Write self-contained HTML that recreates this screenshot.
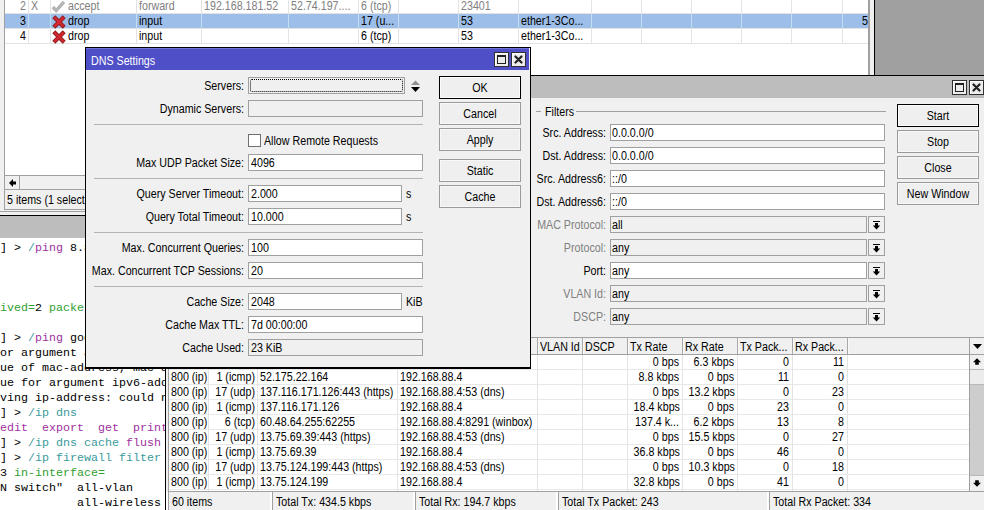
<!DOCTYPE html><html><head><meta charset="utf-8"><style>
html,body{margin:0;padding:0;}
body{width:984px;height:510px;position:relative;overflow:hidden;background:#a0a0a0;font-family:"Liberation Sans", sans-serif;font-size:11px;color:#000;}
div{position:absolute;box-sizing:border-box;}
.t{white-space:pre;font-size:12px;overflow:visible;}
.m{font-family:"Liberation Mono", monospace;font-size:11.67px;}

</style></head><body>
<div style="left:0px;top:0px;width:875px;height:216px;background:#f0f0f0;"></div>
<div style="left:874px;top:0px;width:1px;height:75px;background:#000;"></div>
<div style="left:4px;top:0px;width:1px;height:210px;background:#a0a0a0;"></div>
<div style="left:5px;top:0px;width:864px;height:175px;background:#fff;"></div>
<div style="left:868px;top:0px;width:2px;height:210px;background:#a0a0a0;"></div>
<div style="left:5px;top:13px;width:863px;height:1px;background:#e3e3e3;"></div>
<div style="left:5px;top:28px;width:863px;height:1px;background:#e3e3e3;"></div>
<div style="left:5px;top:43px;width:863px;height:1px;background:#e3e3e3;"></div>
<div style="left:28px;top:0px;width:1px;height:43px;background:#e3e3e3;"></div>
<div style="left:50px;top:0px;width:1px;height:43px;background:#e3e3e3;"></div>
<div style="left:136px;top:0px;width:1px;height:43px;background:#e3e3e3;"></div>
<div style="left:201px;top:0px;width:1px;height:43px;background:#e3e3e3;"></div>
<div style="left:288px;top:0px;width:1px;height:43px;background:#e3e3e3;"></div>
<div style="left:358px;top:0px;width:1px;height:43px;background:#e3e3e3;"></div>
<div style="left:398px;top:0px;width:1px;height:43px;background:#e3e3e3;"></div>
<div style="left:458px;top:0px;width:1px;height:43px;background:#e3e3e3;"></div>
<div style="left:518px;top:0px;width:1px;height:43px;background:#e3e3e3;"></div>
<div style="left:591px;top:0px;width:1px;height:43px;background:#e3e3e3;"></div>
<div style="left:641px;top:0px;width:1px;height:43px;background:#e3e3e3;"></div>
<div style="left:691px;top:0px;width:1px;height:43px;background:#e3e3e3;"></div>
<div style="left:741px;top:0px;width:1px;height:43px;background:#e3e3e3;"></div>
<div style="left:791px;top:0px;width:1px;height:43px;background:#e3e3e3;"></div>
<div style="left:842px;top:0px;width:1px;height:43px;background:#e3e3e3;"></div>
<div style="left:5px;top:14px;width:863px;height:14px;background:#9cbee8;"></div>
<div style="left:28px;top:14px;width:1px;height:14px;background:#c4dcf4;"></div>
<div style="left:50px;top:14px;width:1px;height:14px;background:#c4dcf4;"></div>
<div style="left:136px;top:14px;width:1px;height:14px;background:#c4dcf4;"></div>
<div style="left:201px;top:14px;width:1px;height:14px;background:#c4dcf4;"></div>
<div style="left:288px;top:14px;width:1px;height:14px;background:#c4dcf4;"></div>
<div style="left:358px;top:14px;width:1px;height:14px;background:#c4dcf4;"></div>
<div style="left:398px;top:14px;width:1px;height:14px;background:#c4dcf4;"></div>
<div style="left:458px;top:14px;width:1px;height:14px;background:#c4dcf4;"></div>
<div style="left:518px;top:14px;width:1px;height:14px;background:#c4dcf4;"></div>
<div style="left:591px;top:14px;width:1px;height:14px;background:#c4dcf4;"></div>
<div style="left:641px;top:14px;width:1px;height:14px;background:#c4dcf4;"></div>
<div style="left:691px;top:14px;width:1px;height:14px;background:#c4dcf4;"></div>
<div style="left:741px;top:14px;width:1px;height:14px;background:#c4dcf4;"></div>
<div style="left:791px;top:14px;width:1px;height:14px;background:#c4dcf4;"></div>
<div style="left:842px;top:14px;width:1px;height:14px;background:#c4dcf4;"></div>
<div class="t" style="left:5px;top:-1px;width:21px;height:15px;line-height:15px;text-align:right;transform:scaleX(0.89);transform-origin:100% 0;color:#808080;">2</div>
<div class="t" style="left:31px;top:-1px;height:15px;line-height:15px;text-align:left;transform:scaleX(0.89);transform-origin:0 0;color:#808080;">X</div>
<div class="t" style="left:68px;top:-1px;height:15px;line-height:15px;text-align:left;transform:scaleX(0.89);transform-origin:0 0;color:#808080;">accept</div>
<div class="t" style="left:139px;top:-1px;height:15px;line-height:15px;text-align:left;transform:scaleX(0.89);transform-origin:0 0;color:#808080;">forward</div>
<div class="t" style="left:204px;top:-1px;height:15px;line-height:15px;text-align:left;transform:scaleX(0.89);transform-origin:0 0;color:#808080;">192.168.181.52</div>
<div class="t" style="left:291px;top:-1px;height:15px;line-height:15px;text-align:left;transform:scaleX(0.89);transform-origin:0 0;color:#808080;">52.74.197....</div>
<div class="t" style="left:361px;top:-1px;height:15px;line-height:15px;text-align:left;transform:scaleX(0.89);transform-origin:0 0;color:#808080;">6 (tcp)</div>
<div class="t" style="left:461px;top:-1px;height:15px;line-height:15px;text-align:left;transform:scaleX(0.89);transform-origin:0 0;color:#808080;">23401</div>
<div class="t" style="left:5px;top:14px;width:21px;height:15px;line-height:15px;text-align:right;transform:scaleX(0.89);transform-origin:100% 0;color:#000;">3</div>
<div class="t" style="left:68px;top:14px;height:15px;line-height:15px;text-align:left;transform:scaleX(0.89);transform-origin:0 0;color:#000;">drop</div>
<div class="t" style="left:139px;top:14px;height:15px;line-height:15px;text-align:left;transform:scaleX(0.89);transform-origin:0 0;color:#000;">input</div>
<div class="t" style="left:361px;top:14px;height:15px;line-height:15px;text-align:left;transform:scaleX(0.89);transform-origin:0 0;color:#000;">17 (u...</div>
<div class="t" style="left:461px;top:14px;height:15px;line-height:15px;text-align:left;transform:scaleX(0.89);transform-origin:0 0;color:#000;">53</div>
<div class="t" style="left:521px;top:14px;height:15px;line-height:15px;text-align:left;transform:scaleX(0.89);transform-origin:0 0;color:#000;">ether1-3Co...</div>
<div class="t" style="left:843px;top:14px;width:25px;height:15px;line-height:15px;text-align:right;transform:scaleX(0.89);transform-origin:100% 0;color:#000;">5</div>
<div class="t" style="left:5px;top:29px;width:21px;height:15px;line-height:15px;text-align:right;transform:scaleX(0.89);transform-origin:100% 0;color:#000;">4</div>
<div class="t" style="left:68px;top:29px;height:15px;line-height:15px;text-align:left;transform:scaleX(0.89);transform-origin:0 0;color:#000;">drop</div>
<div class="t" style="left:139px;top:29px;height:15px;line-height:15px;text-align:left;transform:scaleX(0.89);transform-origin:0 0;color:#000;">input</div>
<div class="t" style="left:361px;top:29px;height:15px;line-height:15px;text-align:left;transform:scaleX(0.89);transform-origin:0 0;color:#000;">6 (tcp)</div>
<div class="t" style="left:461px;top:29px;height:15px;line-height:15px;text-align:left;transform:scaleX(0.89);transform-origin:0 0;color:#000;">53</div>
<div class="t" style="left:521px;top:29px;height:15px;line-height:15px;text-align:left;transform:scaleX(0.89);transform-origin:0 0;color:#000;">ether1-3Co...</div>
<svg style="position:absolute;left:51px;top:0px" width="15" height="14" viewBox="0 0 15 14"><path d="M1.8 7L5.2 10.6L13 1.8" stroke="#b4b4b4" stroke-width="3.4" fill="none" stroke-linejoin="miter"/></svg>
<svg style="position:absolute;left:52px;top:15px" width="14" height="14" viewBox="0 0 14 14"><path d="M3.3 3.3L10.7 10.7M10.7 3.3L3.3 10.7" stroke="#8a1a1e" stroke-width="4.2" stroke-linecap="square"/><path d="M3.3 3.3L10.7 10.7M10.7 3.3L3.3 10.7" stroke="#d0282e" stroke-width="2.6" stroke-linecap="square"/></svg>
<svg style="position:absolute;left:52px;top:30px" width="14" height="14" viewBox="0 0 14 14"><path d="M3.3 3.3L10.7 10.7M10.7 3.3L3.3 10.7" stroke="#8a1a1e" stroke-width="4.2" stroke-linecap="square"/><path d="M3.3 3.3L10.7 10.7M10.7 3.3L3.3 10.7" stroke="#d0282e" stroke-width="2.6" stroke-linecap="square"/></svg>
<div style="left:5px;top:175px;width:864px;height:15px;background:#f0f0f0;border-top:1px solid #a0a0a0;border-bottom:1px solid #a0a0a0;"></div>
<div style="left:5px;top:175px;width:15px;height:15px;border-right:1px solid #a0a0a0;border-top:1px solid #a0a0a0;border-bottom:1px solid #a0a0a0;"></div>
<svg style="position:absolute;left:8px;top:178px" width="9" height="10" viewBox="0 0 9 10"><path d="M1 5L5 1V3.5H8V6.5H5V9Z" fill="#000"/></svg>
<div class="t" style="left:7px;top:192px;height:17px;line-height:17px;text-align:left;transform:scaleX(0.89);transform-origin:0 0;">5 items (1 selected)</div>
<div style="left:4px;top:209px;width:865px;height:1px;background:#a0a0a0;"></div>
<div style="left:0px;top:211px;width:875px;height:1px;background:#a0a0a0;"></div>
<div style="left:0px;top:215px;width:984px;height:1px;background:#000;"></div>
<div style="left:0px;top:216px;width:984px;height:22px;background:#bdbdbd;"></div>
<div style="left:0px;top:238px;width:984px;height:272px;background:#fff;"></div>
<div class="t m" style="left:0px;top:241px;height:15px;line-height:15px;"><span style="color:#000">] > </span><span style="color:#3a9a9a">/</span><span style="color:#a030a0">ping</span><span style="color:#000"> 8.8.8.8</span></div>
<div class="t m" style="left:0px;top:301px;height:15px;line-height:15px;"><span style="color:#30a030">ived=</span><span style="color:#000">2</span><span style="color:#30a030"> packet-loss=</span></div>
<div class="t m" style="left:0px;top:331px;height:15px;line-height:15px;"><span style="color:#000">] > </span><span style="color:#3a9a9a">/</span><span style="color:#a030a0">ping</span><span style="color:#000"> google.com</span></div>
<div class="t m" style="left:0px;top:346px;height:15px;line-height:15px;"><span style="color:#000">or argument address</span></div>
<div class="t m" style="left:0px;top:361px;height:15px;line-height:15px;"><span style="color:#000">ue of mac-address, mac-address</span></div>
<div class="t m" style="left:0px;top:376px;height:15px;line-height:15px;"><span style="color:#000">ue for argument ipv6-address</span></div>
<div class="t m" style="left:0px;top:391px;height:15px;line-height:15px;"><span style="color:#000">ving ip-address: could not</span></div>
<div class="t m" style="left:0px;top:406px;height:15px;line-height:15px;"><span style="color:#000">] > </span><span style="color:#3a9a9a">/ip dns</span></div>
<div class="t m" style="left:0px;top:421px;height:15px;line-height:15px;"><span style="color:#a030a0">edit  export  get  print</span></div>
<div class="t m" style="left:0px;top:436px;height:15px;line-height:15px;"><span style="color:#000">] > </span><span style="color:#3a9a9a">/ip dns cache </span><span style="color:#a030a0">flush</span></div>
<div class="t m" style="left:0px;top:451px;height:15px;line-height:15px;"><span style="color:#000">] > </span><span style="color:#3a9a9a">/ip firewall filter</span></div>
<div class="t m" style="left:0px;top:466px;height:15px;line-height:15px;"><span style="color:#000">3 </span><span style="color:#30a030">in-interface=</span></div>
<div class="t m" style="left:0px;top:481px;height:15px;line-height:15px;"><span style="color:#000">N switch"  all-vlan</span></div>
<div class="t m" style="left:0px;top:496px;height:15px;line-height:15px;"><span style="color:#000">           all-wireless</span></div>
<div style="left:165px;top:75px;width:819px;height:435px;background:#f0f0f0;border-left:1px solid #000;border-top:1px solid #000;"></div>
<div style="left:166px;top:76px;width:818px;height:22px;background:#bdbdbd;"></div>
<div style="left:952px;top:80px;width:15px;height:15px;background:#ececec;border:1px solid #303030;box-shadow:inset 1px 1px 0 #fff;"><div style="left:2px;top:2px;width:9px;height:9px;border:1px solid #202020;border-top-width:2px;"></div></div>
<div style="left:969px;top:80px;width:15px;height:15px;background:#ececec;border:1px solid #303030;box-shadow:inset 1px 1px 0 #fff;"></div>
<svg style="position:absolute;left:972px;top:83px" width="9" height="9" viewBox="0 0 9 9"><path d="M1.5 1.5L7.5 7.5M7.5 1.5L1.5 7.5" stroke="#202020" stroke-width="2.2" stroke-linecap="round"/></svg>
<div style="left:536px;top:111px;width:5px;height:1px;background:#a0a0a0;"></div>
<div style="left:576px;top:111px;width:310px;height:1px;background:#a0a0a0;"></div>
<div class="t" style="left:545px;top:105px;height:15px;line-height:15px;text-align:left;transform:scaleX(0.89);transform-origin:0 0;">Filters</div>
<div style="left:610px;top:124px;width:275px;height:17px;background:#fff;border:1px solid #a0a0a0;"></div>
<div class="t" style="left:612px;top:126px;height:15px;line-height:15px;text-align:left;transform:scaleX(0.89);transform-origin:0 0;">0.0.0.0/0</div>
<div class="t" style="left:446px;top:126px;width:160px;height:15px;line-height:15px;text-align:right;transform:scaleX(0.89);transform-origin:100% 0;color:#000;">Src. Address:</div>
<div style="left:610px;top:147px;width:275px;height:17px;background:#fff;border:1px solid #a0a0a0;"></div>
<div class="t" style="left:612px;top:149px;height:15px;line-height:15px;text-align:left;transform:scaleX(0.89);transform-origin:0 0;">0.0.0.0/0</div>
<div class="t" style="left:446px;top:149px;width:160px;height:15px;line-height:15px;text-align:right;transform:scaleX(0.89);transform-origin:100% 0;color:#000;">Dst. Address:</div>
<div style="left:610px;top:170px;width:275px;height:17px;background:#fff;border:1px solid #a0a0a0;"></div>
<div class="t" style="left:612px;top:172px;height:15px;line-height:15px;text-align:left;transform:scaleX(0.89);transform-origin:0 0;">::/0</div>
<div class="t" style="left:446px;top:172px;width:160px;height:15px;line-height:15px;text-align:right;transform:scaleX(0.89);transform-origin:100% 0;color:#000;">Src. Address6:</div>
<div style="left:610px;top:193px;width:275px;height:17px;background:#fff;border:1px solid #a0a0a0;"></div>
<div class="t" style="left:612px;top:195px;height:15px;line-height:15px;text-align:left;transform:scaleX(0.89);transform-origin:0 0;">::/0</div>
<div class="t" style="left:446px;top:195px;width:160px;height:15px;line-height:15px;text-align:right;transform:scaleX(0.89);transform-origin:100% 0;color:#000;">Dst. Address6:</div>
<div style="left:610px;top:216px;width:257px;height:17px;background:#f0f0f0;border:1px solid #a0a0a0;"></div>
<div class="t" style="left:612px;top:218px;height:15px;line-height:15px;text-align:left;transform:scaleX(0.89);transform-origin:0 0;">all</div>
<div class="t" style="left:446px;top:218px;width:160px;height:15px;line-height:15px;text-align:right;transform:scaleX(0.89);transform-origin:100% 0;color:#808080;">MAC Protocol:</div>
<div style="left:868px;top:216px;width:17px;height:17px;background:#f0f0f0;border:1px solid #a0a0a0;"></div>
<svg style="position:absolute;left:872px;top:221px" width="9" height="9" viewBox="0 0 9 9"><rect x="1" y="0" width="7" height="1" fill="#000"/><path d="M3 2H6V4.5H8.2L4.5 8.5L0.8 4.5H3Z" fill="#000"/></svg>
<div style="left:610px;top:239px;width:257px;height:17px;background:#f0f0f0;border:1px solid #a0a0a0;"></div>
<div class="t" style="left:612px;top:241px;height:15px;line-height:15px;text-align:left;transform:scaleX(0.89);transform-origin:0 0;">any</div>
<div class="t" style="left:446px;top:241px;width:160px;height:15px;line-height:15px;text-align:right;transform:scaleX(0.89);transform-origin:100% 0;color:#808080;">Protocol:</div>
<div style="left:868px;top:239px;width:17px;height:17px;background:#f0f0f0;border:1px solid #a0a0a0;"></div>
<svg style="position:absolute;left:872px;top:244px" width="9" height="9" viewBox="0 0 9 9"><rect x="1" y="0" width="7" height="1" fill="#000"/><path d="M3 2H6V4.5H8.2L4.5 8.5L0.8 4.5H3Z" fill="#000"/></svg>
<div style="left:610px;top:262px;width:257px;height:17px;background:#fff;border:1px solid #a0a0a0;"></div>
<div class="t" style="left:612px;top:264px;height:15px;line-height:15px;text-align:left;transform:scaleX(0.89);transform-origin:0 0;">any</div>
<div class="t" style="left:446px;top:264px;width:160px;height:15px;line-height:15px;text-align:right;transform:scaleX(0.89);transform-origin:100% 0;color:#000;">Port:</div>
<div style="left:868px;top:262px;width:17px;height:17px;background:#f0f0f0;border:1px solid #a0a0a0;"></div>
<svg style="position:absolute;left:872px;top:267px" width="9" height="9" viewBox="0 0 9 9"><rect x="1" y="0" width="7" height="1" fill="#000"/><path d="M3 2H6V4.5H8.2L4.5 8.5L0.8 4.5H3Z" fill="#000"/></svg>
<div style="left:610px;top:285px;width:257px;height:17px;background:#f0f0f0;border:1px solid #a0a0a0;"></div>
<div class="t" style="left:612px;top:287px;height:15px;line-height:15px;text-align:left;transform:scaleX(0.89);transform-origin:0 0;">any</div>
<div class="t" style="left:446px;top:287px;width:160px;height:15px;line-height:15px;text-align:right;transform:scaleX(0.89);transform-origin:100% 0;color:#808080;">VLAN Id:</div>
<div style="left:868px;top:285px;width:17px;height:17px;background:#f0f0f0;border:1px solid #a0a0a0;"></div>
<svg style="position:absolute;left:872px;top:290px" width="9" height="9" viewBox="0 0 9 9"><rect x="1" y="0" width="7" height="1" fill="#000"/><path d="M3 2H6V4.5H8.2L4.5 8.5L0.8 4.5H3Z" fill="#000"/></svg>
<div style="left:610px;top:308px;width:257px;height:17px;background:#f0f0f0;border:1px solid #a0a0a0;"></div>
<div class="t" style="left:612px;top:310px;height:15px;line-height:15px;text-align:left;transform:scaleX(0.89);transform-origin:0 0;">any</div>
<div class="t" style="left:446px;top:310px;width:160px;height:15px;line-height:15px;text-align:right;transform:scaleX(0.89);transform-origin:100% 0;color:#808080;">DSCP:</div>
<div style="left:868px;top:308px;width:17px;height:17px;background:#f0f0f0;border:1px solid #a0a0a0;"></div>
<svg style="position:absolute;left:872px;top:313px" width="9" height="9" viewBox="0 0 9 9"><rect x="1" y="0" width="7" height="1" fill="#000"/><path d="M3 2H6V4.5H8.2L4.5 8.5L0.8 4.5H3Z" fill="#000"/></svg>
<div style="left:897px;top:104px;width:82px;height:23px;background:#efefef;border:1px solid #000;box-shadow:inset 0 0 0 1px #fcfcfc;"></div>
<div class="t" style="left:897px;top:109px;width:82px;height:15px;line-height:15px;text-align:center;transform:scaleX(0.89);transform-origin:50% 0;">Start</div>
<div style="left:897px;top:130px;width:82px;height:23px;background:#efefef;border:1px solid #9a9a9a;box-shadow:inset 0 0 0 1px #f8f8f8;"></div>
<div class="t" style="left:897px;top:135px;width:82px;height:15px;line-height:15px;text-align:center;transform:scaleX(0.89);transform-origin:50% 0;">Stop</div>
<div style="left:897px;top:156px;width:82px;height:23px;background:#efefef;border:1px solid #9a9a9a;box-shadow:inset 0 0 0 1px #f8f8f8;"></div>
<div class="t" style="left:897px;top:161px;width:82px;height:15px;line-height:15px;text-align:center;transform:scaleX(0.89);transform-origin:50% 0;">Close</div>
<div style="left:897px;top:182px;width:82px;height:23px;background:#efefef;border:1px solid #9a9a9a;box-shadow:inset 0 0 0 1px #f8f8f8;"></div>
<div class="t" style="left:897px;top:187px;width:82px;height:15px;line-height:15px;text-align:center;transform:scaleX(0.89);transform-origin:50% 0;">New Window</div>
<div style="left:168px;top:337px;width:816px;height:155px;background:#fff;border:1px solid #a0a0a0;"></div>
<div style="left:169px;top:338px;width:800px;height:17px;background:#f0f0f0;border-bottom:1px solid #a0a0a0;"></div>
<div style="left:208px;top:355px;width:1px;height:136px;background:#e3e3e3;"></div>
<div style="left:208px;top:338px;width:1px;height:16px;background:#a8a8a8;"></div>
<div style="left:209px;top:338px;width:1px;height:16px;background:#fafafa;"></div>
<div style="left:257px;top:355px;width:1px;height:136px;background:#e3e3e3;"></div>
<div style="left:257px;top:338px;width:1px;height:16px;background:#a8a8a8;"></div>
<div style="left:258px;top:338px;width:1px;height:16px;background:#fafafa;"></div>
<div style="left:397px;top:355px;width:1px;height:136px;background:#e3e3e3;"></div>
<div style="left:397px;top:338px;width:1px;height:16px;background:#a8a8a8;"></div>
<div style="left:398px;top:338px;width:1px;height:16px;background:#fafafa;"></div>
<div style="left:537px;top:355px;width:1px;height:136px;background:#e3e3e3;"></div>
<div style="left:537px;top:338px;width:1px;height:16px;background:#a8a8a8;"></div>
<div style="left:538px;top:338px;width:1px;height:16px;background:#fafafa;"></div>
<div style="left:582px;top:355px;width:1px;height:136px;background:#e3e3e3;"></div>
<div style="left:582px;top:338px;width:1px;height:16px;background:#a8a8a8;"></div>
<div style="left:583px;top:338px;width:1px;height:16px;background:#fafafa;"></div>
<div style="left:627px;top:355px;width:1px;height:136px;background:#e3e3e3;"></div>
<div style="left:627px;top:338px;width:1px;height:16px;background:#a8a8a8;"></div>
<div style="left:628px;top:338px;width:1px;height:16px;background:#fafafa;"></div>
<div style="left:682px;top:355px;width:1px;height:136px;background:#e3e3e3;"></div>
<div style="left:682px;top:338px;width:1px;height:16px;background:#a8a8a8;"></div>
<div style="left:683px;top:338px;width:1px;height:16px;background:#fafafa;"></div>
<div style="left:737px;top:355px;width:1px;height:136px;background:#e3e3e3;"></div>
<div style="left:737px;top:338px;width:1px;height:16px;background:#a8a8a8;"></div>
<div style="left:738px;top:338px;width:1px;height:16px;background:#fafafa;"></div>
<div style="left:792px;top:355px;width:1px;height:136px;background:#e3e3e3;"></div>
<div style="left:792px;top:338px;width:1px;height:16px;background:#a8a8a8;"></div>
<div style="left:793px;top:338px;width:1px;height:16px;background:#fafafa;"></div>
<div style="left:847px;top:355px;width:1px;height:136px;background:#e3e3e3;"></div>
<div style="left:847px;top:338px;width:1px;height:16px;background:#a8a8a8;"></div>
<div style="left:848px;top:338px;width:1px;height:16px;background:#fafafa;"></div>
<div style="left:169px;top:369px;width:800px;height:1px;background:#e8e8e8;"></div>
<div style="left:169px;top:384px;width:800px;height:1px;background:#e8e8e8;"></div>
<div style="left:169px;top:399px;width:800px;height:1px;background:#e8e8e8;"></div>
<div style="left:169px;top:414px;width:800px;height:1px;background:#e8e8e8;"></div>
<div style="left:169px;top:429px;width:800px;height:1px;background:#e8e8e8;"></div>
<div style="left:169px;top:444px;width:800px;height:1px;background:#e8e8e8;"></div>
<div style="left:169px;top:459px;width:800px;height:1px;background:#e8e8e8;"></div>
<div style="left:169px;top:474px;width:800px;height:1px;background:#e8e8e8;"></div>
<div style="left:169px;top:489px;width:800px;height:1px;background:#e8e8e8;"></div>
<div class="t" style="left:540px;top:340px;height:15px;line-height:15px;text-align:left;transform:scaleX(0.89);transform-origin:0 0;">VLAN Id</div>
<div class="t" style="left:585px;top:340px;height:15px;line-height:15px;text-align:left;transform:scaleX(0.89);transform-origin:0 0;">DSCP</div>
<div class="t" style="left:630px;top:340px;height:15px;line-height:15px;text-align:left;transform:scaleX(0.89);transform-origin:0 0;">Tx Rate</div>
<div class="t" style="left:685px;top:340px;height:15px;line-height:15px;text-align:left;transform:scaleX(0.89);transform-origin:0 0;">Rx Rate</div>
<div class="t" style="left:740px;top:340px;height:15px;line-height:15px;text-align:left;transform:scaleX(0.89);transform-origin:0 0;">Tx Pack...</div>
<div class="t" style="left:795px;top:340px;height:15px;line-height:15px;text-align:left;transform:scaleX(0.89);transform-origin:0 0;">Rx Pack...</div>
<div class="t" style="left:171px;top:355px;height:15px;line-height:15px;text-align:left;transform:scaleX(0.89);transform-origin:0 0;">800 (ip)</div>
<div class="t" style="left:209px;top:355px;width:46px;height:15px;line-height:15px;text-align:right;transform:scaleX(0.89);transform-origin:100% 0;">17 (udp)</div>
<div class="t" style="left:260px;top:355px;height:15px;line-height:15px;text-align:left;transform:scaleX(0.89);transform-origin:0 0;">52.175.22.164:443 (https)</div>
<div class="t" style="left:400px;top:355px;height:15px;line-height:15px;text-align:left;transform:scaleX(0.89);transform-origin:0 0;">192.168.88.4:53 (dns)</div>
<div class="t" style="left:628px;top:355px;width:51px;height:15px;line-height:15px;text-align:right;transform:scaleX(0.89);transform-origin:100% 0;">0 bps</div>
<div class="t" style="left:683px;top:355px;width:51px;height:15px;line-height:15px;text-align:right;transform:scaleX(0.89);transform-origin:100% 0;">6.3 kbps</div>
<div class="t" style="left:738px;top:355px;width:51px;height:15px;line-height:15px;text-align:right;transform:scaleX(0.89);transform-origin:100% 0;">0</div>
<div class="t" style="left:793px;top:355px;width:51px;height:15px;line-height:15px;text-align:right;transform:scaleX(0.89);transform-origin:100% 0;">11</div>
<div class="t" style="left:171px;top:370px;height:15px;line-height:15px;text-align:left;transform:scaleX(0.89);transform-origin:0 0;">800 (ip)</div>
<div class="t" style="left:209px;top:370px;width:46px;height:15px;line-height:15px;text-align:right;transform:scaleX(0.89);transform-origin:100% 0;">1 (icmp)</div>
<div class="t" style="left:260px;top:370px;height:15px;line-height:15px;text-align:left;transform:scaleX(0.89);transform-origin:0 0;">52.175.22.164</div>
<div class="t" style="left:400px;top:370px;height:15px;line-height:15px;text-align:left;transform:scaleX(0.89);transform-origin:0 0;">192.168.88.4</div>
<div class="t" style="left:628px;top:370px;width:51px;height:15px;line-height:15px;text-align:right;transform:scaleX(0.89);transform-origin:100% 0;">8.8 kbps</div>
<div class="t" style="left:683px;top:370px;width:51px;height:15px;line-height:15px;text-align:right;transform:scaleX(0.89);transform-origin:100% 0;">0 bps</div>
<div class="t" style="left:738px;top:370px;width:51px;height:15px;line-height:15px;text-align:right;transform:scaleX(0.89);transform-origin:100% 0;">11</div>
<div class="t" style="left:793px;top:370px;width:51px;height:15px;line-height:15px;text-align:right;transform:scaleX(0.89);transform-origin:100% 0;">0</div>
<div class="t" style="left:171px;top:385px;height:15px;line-height:15px;text-align:left;transform:scaleX(0.89);transform-origin:0 0;">800 (ip)</div>
<div class="t" style="left:209px;top:385px;width:46px;height:15px;line-height:15px;text-align:right;transform:scaleX(0.89);transform-origin:100% 0;">17 (udp)</div>
<div class="t" style="left:260px;top:385px;height:15px;line-height:15px;text-align:left;transform:scaleX(0.89);transform-origin:0 0;">137.116.171.126:443 (https)</div>
<div class="t" style="left:400px;top:385px;height:15px;line-height:15px;text-align:left;transform:scaleX(0.89);transform-origin:0 0;">192.168.88.4:53 (dns)</div>
<div class="t" style="left:628px;top:385px;width:51px;height:15px;line-height:15px;text-align:right;transform:scaleX(0.89);transform-origin:100% 0;">0 bps</div>
<div class="t" style="left:683px;top:385px;width:51px;height:15px;line-height:15px;text-align:right;transform:scaleX(0.89);transform-origin:100% 0;">13.2 kbps</div>
<div class="t" style="left:738px;top:385px;width:51px;height:15px;line-height:15px;text-align:right;transform:scaleX(0.89);transform-origin:100% 0;">0</div>
<div class="t" style="left:793px;top:385px;width:51px;height:15px;line-height:15px;text-align:right;transform:scaleX(0.89);transform-origin:100% 0;">23</div>
<div class="t" style="left:171px;top:400px;height:15px;line-height:15px;text-align:left;transform:scaleX(0.89);transform-origin:0 0;">800 (ip)</div>
<div class="t" style="left:209px;top:400px;width:46px;height:15px;line-height:15px;text-align:right;transform:scaleX(0.89);transform-origin:100% 0;">1 (icmp)</div>
<div class="t" style="left:260px;top:400px;height:15px;line-height:15px;text-align:left;transform:scaleX(0.89);transform-origin:0 0;">137.116.171.126</div>
<div class="t" style="left:400px;top:400px;height:15px;line-height:15px;text-align:left;transform:scaleX(0.89);transform-origin:0 0;">192.168.88.4</div>
<div class="t" style="left:628px;top:400px;width:51px;height:15px;line-height:15px;text-align:right;transform:scaleX(0.89);transform-origin:100% 0;">18.4 kbps</div>
<div class="t" style="left:683px;top:400px;width:51px;height:15px;line-height:15px;text-align:right;transform:scaleX(0.89);transform-origin:100% 0;">0 bps</div>
<div class="t" style="left:738px;top:400px;width:51px;height:15px;line-height:15px;text-align:right;transform:scaleX(0.89);transform-origin:100% 0;">23</div>
<div class="t" style="left:793px;top:400px;width:51px;height:15px;line-height:15px;text-align:right;transform:scaleX(0.89);transform-origin:100% 0;">0</div>
<div class="t" style="left:171px;top:415px;height:15px;line-height:15px;text-align:left;transform:scaleX(0.89);transform-origin:0 0;">800 (ip)</div>
<div class="t" style="left:209px;top:415px;width:46px;height:15px;line-height:15px;text-align:right;transform:scaleX(0.89);transform-origin:100% 0;">6 (tcp)</div>
<div class="t" style="left:260px;top:415px;height:15px;line-height:15px;text-align:left;transform:scaleX(0.89);transform-origin:0 0;">60.48.64.255:62255</div>
<div class="t" style="left:400px;top:415px;height:15px;line-height:15px;text-align:left;transform:scaleX(0.89);transform-origin:0 0;">192.168.88.4:8291 (winbox)</div>
<div class="t" style="left:628px;top:415px;width:51px;height:15px;line-height:15px;text-align:right;transform:scaleX(0.89);transform-origin:100% 0;">137.4 k...</div>
<div class="t" style="left:683px;top:415px;width:51px;height:15px;line-height:15px;text-align:right;transform:scaleX(0.89);transform-origin:100% 0;">6.2 kbps</div>
<div class="t" style="left:738px;top:415px;width:51px;height:15px;line-height:15px;text-align:right;transform:scaleX(0.89);transform-origin:100% 0;">13</div>
<div class="t" style="left:793px;top:415px;width:51px;height:15px;line-height:15px;text-align:right;transform:scaleX(0.89);transform-origin:100% 0;">8</div>
<div class="t" style="left:171px;top:430px;height:15px;line-height:15px;text-align:left;transform:scaleX(0.89);transform-origin:0 0;">800 (ip)</div>
<div class="t" style="left:209px;top:430px;width:46px;height:15px;line-height:15px;text-align:right;transform:scaleX(0.89);transform-origin:100% 0;">17 (udp)</div>
<div class="t" style="left:260px;top:430px;height:15px;line-height:15px;text-align:left;transform:scaleX(0.89);transform-origin:0 0;">13.75.69.39:443 (https)</div>
<div class="t" style="left:400px;top:430px;height:15px;line-height:15px;text-align:left;transform:scaleX(0.89);transform-origin:0 0;">192.168.88.4:53 (dns)</div>
<div class="t" style="left:628px;top:430px;width:51px;height:15px;line-height:15px;text-align:right;transform:scaleX(0.89);transform-origin:100% 0;">0 bps</div>
<div class="t" style="left:683px;top:430px;width:51px;height:15px;line-height:15px;text-align:right;transform:scaleX(0.89);transform-origin:100% 0;">15.5 kbps</div>
<div class="t" style="left:738px;top:430px;width:51px;height:15px;line-height:15px;text-align:right;transform:scaleX(0.89);transform-origin:100% 0;">0</div>
<div class="t" style="left:793px;top:430px;width:51px;height:15px;line-height:15px;text-align:right;transform:scaleX(0.89);transform-origin:100% 0;">27</div>
<div class="t" style="left:171px;top:445px;height:15px;line-height:15px;text-align:left;transform:scaleX(0.89);transform-origin:0 0;">800 (ip)</div>
<div class="t" style="left:209px;top:445px;width:46px;height:15px;line-height:15px;text-align:right;transform:scaleX(0.89);transform-origin:100% 0;">1 (icmp)</div>
<div class="t" style="left:260px;top:445px;height:15px;line-height:15px;text-align:left;transform:scaleX(0.89);transform-origin:0 0;">13.75.69.39</div>
<div class="t" style="left:400px;top:445px;height:15px;line-height:15px;text-align:left;transform:scaleX(0.89);transform-origin:0 0;">192.168.88.4</div>
<div class="t" style="left:628px;top:445px;width:51px;height:15px;line-height:15px;text-align:right;transform:scaleX(0.89);transform-origin:100% 0;">36.8 kbps</div>
<div class="t" style="left:683px;top:445px;width:51px;height:15px;line-height:15px;text-align:right;transform:scaleX(0.89);transform-origin:100% 0;">0 bps</div>
<div class="t" style="left:738px;top:445px;width:51px;height:15px;line-height:15px;text-align:right;transform:scaleX(0.89);transform-origin:100% 0;">46</div>
<div class="t" style="left:793px;top:445px;width:51px;height:15px;line-height:15px;text-align:right;transform:scaleX(0.89);transform-origin:100% 0;">0</div>
<div class="t" style="left:171px;top:460px;height:15px;line-height:15px;text-align:left;transform:scaleX(0.89);transform-origin:0 0;">800 (ip)</div>
<div class="t" style="left:209px;top:460px;width:46px;height:15px;line-height:15px;text-align:right;transform:scaleX(0.89);transform-origin:100% 0;">17 (udp)</div>
<div class="t" style="left:260px;top:460px;height:15px;line-height:15px;text-align:left;transform:scaleX(0.89);transform-origin:0 0;">13.75.124.199:443 (https)</div>
<div class="t" style="left:400px;top:460px;height:15px;line-height:15px;text-align:left;transform:scaleX(0.89);transform-origin:0 0;">192.168.88.4:53 (dns)</div>
<div class="t" style="left:628px;top:460px;width:51px;height:15px;line-height:15px;text-align:right;transform:scaleX(0.89);transform-origin:100% 0;">0 bps</div>
<div class="t" style="left:683px;top:460px;width:51px;height:15px;line-height:15px;text-align:right;transform:scaleX(0.89);transform-origin:100% 0;">10.3 kbps</div>
<div class="t" style="left:738px;top:460px;width:51px;height:15px;line-height:15px;text-align:right;transform:scaleX(0.89);transform-origin:100% 0;">0</div>
<div class="t" style="left:793px;top:460px;width:51px;height:15px;line-height:15px;text-align:right;transform:scaleX(0.89);transform-origin:100% 0;">18</div>
<div class="t" style="left:171px;top:475px;height:15px;line-height:15px;text-align:left;transform:scaleX(0.89);transform-origin:0 0;">800 (ip)</div>
<div class="t" style="left:209px;top:475px;width:46px;height:15px;line-height:15px;text-align:right;transform:scaleX(0.89);transform-origin:100% 0;">1 (icmp)</div>
<div class="t" style="left:260px;top:475px;height:15px;line-height:15px;text-align:left;transform:scaleX(0.89);transform-origin:0 0;">13.75.124.199</div>
<div class="t" style="left:400px;top:475px;height:15px;line-height:15px;text-align:left;transform:scaleX(0.89);transform-origin:0 0;">192.168.88.4</div>
<div class="t" style="left:628px;top:475px;width:51px;height:15px;line-height:15px;text-align:right;transform:scaleX(0.89);transform-origin:100% 0;">32.8 kbps</div>
<div class="t" style="left:683px;top:475px;width:51px;height:15px;line-height:15px;text-align:right;transform:scaleX(0.89);transform-origin:100% 0;">0 bps</div>
<div class="t" style="left:738px;top:475px;width:51px;height:15px;line-height:15px;text-align:right;transform:scaleX(0.89);transform-origin:100% 0;">41</div>
<div class="t" style="left:793px;top:475px;width:51px;height:15px;line-height:15px;text-align:right;transform:scaleX(0.89);transform-origin:100% 0;">0</div>
<div style="left:969px;top:338px;width:15px;height:153px;background:#cdcdcd;"></div>
<div style="left:969px;top:337px;width:15px;height:18px;background:#f0f0f0;border-top:1px solid #a0a0a0;border-bottom:1px solid #a0a0a0;"></div>
<div style="left:969px;top:338px;width:1px;height:153px;background:#a0a0a0;"></div>
<svg style="position:absolute;left:973px;top:344px" width="9" height="5" viewBox="0 0 9 5"><path d="M0 0H9L4.5 5Z" fill="#000"/></svg>
<div style="left:970px;top:355px;width:14px;height:15px;background:#f0f0f0;border-bottom:1px solid #b8b8b8;"></div>
<svg style="position:absolute;left:973px;top:358px" width="8" height="7" viewBox="0 0 8 7"><path d="M4 0.3L8 4.2H5.8V6.8H2.2V4.2H0Z" fill="#000"/></svg>
<div style="left:970px;top:370px;width:14px;height:15px;background:#ececec;border-bottom:1px solid #b8b8b8;"></div>
<div style="left:970px;top:475px;width:14px;height:16px;background:#f0f0f0;border-top:1px solid #b8b8b8;"></div>
<svg style="position:absolute;left:973px;top:480px" width="8" height="7" viewBox="0 0 8 7"><path d="M4 6.7L8 2.8H5.8V0.2H2.2V2.8H0Z" fill="#000"/></svg>
<div style="left:166px;top:492px;width:818px;height:18px;background:#f0f0f0;"></div>
<div style="left:168px;top:492px;width:103px;height:18px;border-left:1px solid #a0a0a0;box-shadow:-2px 0 0 #fff;"></div>
<div class="t" style="left:172px;top:495px;height:15px;line-height:15px;text-align:left;transform:scaleX(0.89);transform-origin:0 0;">60 items</div>
<div style="left:272px;top:492px;width:142px;height:18px;border-left:1px solid #a0a0a0;box-shadow:-2px 0 0 #fff;"></div>
<div class="t" style="left:276px;top:495px;height:15px;line-height:15px;text-align:left;transform:scaleX(0.89);transform-origin:0 0;">Total Tx: 434.5 kbps</div>
<div style="left:415px;top:492px;width:142px;height:18px;border-left:1px solid #a0a0a0;box-shadow:-2px 0 0 #fff;"></div>
<div class="t" style="left:419px;top:495px;height:15px;line-height:15px;text-align:left;transform:scaleX(0.89);transform-origin:0 0;">Total Rx: 194.7 kbps</div>
<div style="left:558px;top:492px;width:210px;height:18px;border-left:1px solid #a0a0a0;box-shadow:-2px 0 0 #fff;"></div>
<div class="t" style="left:562px;top:495px;height:15px;line-height:15px;text-align:left;transform:scaleX(0.89);transform-origin:0 0;">Total Tx Packet: 243</div>
<div style="left:769px;top:492px;width:221px;height:18px;border-left:1px solid #a0a0a0;box-shadow:-2px 0 0 #fff;"></div>
<div class="t" style="left:773px;top:495px;height:15px;line-height:15px;text-align:left;transform:scaleX(0.89);transform-origin:0 0;">Total Rx Packet: 334</div>
<div style="left:85px;top:47px;width:446px;height:322px;background:#f0f0f0;border:1px solid #000;border-bottom-width:2px;"></div>
<div style="left:86px;top:48px;width:443px;height:22px;background:#4f4fc8;border-top:1px solid #7474d8;"></div>
<div class="t" style="left:91px;top:54px;height:15px;line-height:15px;text-align:left;transform:scaleX(0.89);transform-origin:0 0;color:#fff;">DNS Settings</div>
<div style="left:494px;top:52px;width:15px;height:15px;background:#ececec;border:1px solid #303030;box-shadow:inset 1px 1px 0 #fff;"><div style="left:2px;top:2px;width:9px;height:9px;border:1px solid #202020;border-top-width:2px;"></div></div>
<div style="left:511px;top:52px;width:15px;height:15px;background:#ececec;border:1px solid #303030;box-shadow:inset 1px 1px 0 #fff;"></div>
<svg style="position:absolute;left:514px;top:55px" width="9" height="9" viewBox="0 0 9 9"><path d="M1.5 1.5L7.5 7.5M7.5 1.5L1.5 7.5" stroke="#202020" stroke-width="2.2" stroke-linecap="round"/></svg>
<div style="left:248px;top:77px;width:157px;height:17px;background:#f0f0f0;border:1px solid #a0a0a0;"></div>
<div class="t" style="left:251px;top:79px;height:15px;line-height:15px;text-align:left;transform:scaleX(0.89);transform-origin:0 0;"></div>
<div class="t" style="left:44px;top:79px;width:200px;height:15px;line-height:15px;text-align:right;transform:scaleX(0.89);transform-origin:100% 0;">Servers:</div>
<div style="left:250px;top:79px;width:153px;height:13px;border:1px dotted #000;border-radius:2px;"></div>
<svg style="position:absolute;left:410px;top:80px" width="11" height="13" viewBox="0 0 11 13"><path d="M1 5L5.5 0.5L10 5Z" fill="#909090"/><path d="M1 7L5.5 12L10 7Z" fill="#000"/></svg>
<div style="left:248px;top:100px;width:175px;height:17px;background:#f0f0f0;border:1px solid #a0a0a0;"></div>
<div class="t" style="left:251px;top:102px;height:15px;line-height:15px;text-align:left;transform:scaleX(0.89);transform-origin:0 0;"></div>
<div class="t" style="left:44px;top:102px;width:200px;height:15px;line-height:15px;text-align:right;transform:scaleX(0.89);transform-origin:100% 0;">Dynamic Servers:</div>
<div style="left:94px;top:124px;width:329px;height:1px;background:#b4b4b4;"></div>
<div style="left:94px;top:178px;width:329px;height:1px;background:#b4b4b4;"></div>
<div style="left:94px;top:232px;width:329px;height:1px;background:#b4b4b4;"></div>
<div style="left:94px;top:286px;width:329px;height:1px;background:#b4b4b4;"></div>
<div style="left:248px;top:134px;width:13px;height:13px;background:#fff;border:1px solid #707070;"></div>
<div class="t" style="left:264px;top:134px;height:15px;line-height:15px;text-align:left;transform:scaleX(0.89);transform-origin:0 0;">Allow Remote Requests</div>
<div style="left:248px;top:154px;width:175px;height:17px;background:#fff;border:1px solid #a0a0a0;"></div>
<div class="t" style="left:251px;top:156px;height:15px;line-height:15px;text-align:left;transform:scaleX(0.89);transform-origin:0 0;">4096</div>
<div class="t" style="left:44px;top:156px;width:200px;height:15px;line-height:15px;text-align:right;transform:scaleX(0.89);transform-origin:100% 0;">Max UDP Packet Size:</div>
<div style="left:248px;top:185px;width:154px;height:17px;background:#fff;border:1px solid #a0a0a0;"></div>
<div class="t" style="left:251px;top:187px;height:15px;line-height:15px;text-align:left;transform:scaleX(0.89);transform-origin:0 0;">2.000</div>
<div class="t" style="left:44px;top:187px;width:200px;height:15px;line-height:15px;text-align:right;transform:scaleX(0.89);transform-origin:100% 0;">Query Server Timeout:</div>
<div class="t" style="left:406px;top:187px;height:15px;line-height:15px;text-align:left;transform:scaleX(0.89);transform-origin:0 0;">s</div>
<div style="left:248px;top:208px;width:154px;height:17px;background:#fff;border:1px solid #a0a0a0;"></div>
<div class="t" style="left:251px;top:210px;height:15px;line-height:15px;text-align:left;transform:scaleX(0.89);transform-origin:0 0;">10.000</div>
<div class="t" style="left:44px;top:210px;width:200px;height:15px;line-height:15px;text-align:right;transform:scaleX(0.89);transform-origin:100% 0;">Query Total Timeout:</div>
<div class="t" style="left:406px;top:210px;height:15px;line-height:15px;text-align:left;transform:scaleX(0.89);transform-origin:0 0;">s</div>
<div style="left:248px;top:239px;width:175px;height:17px;background:#fff;border:1px solid #a0a0a0;"></div>
<div class="t" style="left:251px;top:241px;height:15px;line-height:15px;text-align:left;transform:scaleX(0.89);transform-origin:0 0;">100</div>
<div class="t" style="left:44px;top:241px;width:200px;height:15px;line-height:15px;text-align:right;transform:scaleX(0.89);transform-origin:100% 0;">Max. Concurrent Queries:</div>
<div style="left:248px;top:262px;width:175px;height:17px;background:#fff;border:1px solid #a0a0a0;"></div>
<div class="t" style="left:251px;top:264px;height:15px;line-height:15px;text-align:left;transform:scaleX(0.89);transform-origin:0 0;">20</div>
<div class="t" style="left:44px;top:264px;width:200px;height:15px;line-height:15px;text-align:right;transform:scaleX(0.89);transform-origin:100% 0;">Max. Concurrent TCP Sessions:</div>
<div style="left:248px;top:293px;width:154px;height:17px;background:#fff;border:1px solid #a0a0a0;"></div>
<div class="t" style="left:251px;top:295px;height:15px;line-height:15px;text-align:left;transform:scaleX(0.89);transform-origin:0 0;">2048</div>
<div class="t" style="left:44px;top:295px;width:200px;height:15px;line-height:15px;text-align:right;transform:scaleX(0.89);transform-origin:100% 0;">Cache Size:</div>
<div class="t" style="left:406px;top:295px;height:15px;line-height:15px;text-align:left;transform:scaleX(0.89);transform-origin:0 0;">KiB</div>
<div style="left:248px;top:316px;width:175px;height:17px;background:#fff;border:1px solid #a0a0a0;"></div>
<div class="t" style="left:251px;top:318px;height:15px;line-height:15px;text-align:left;transform:scaleX(0.89);transform-origin:0 0;">7d 00:00:00</div>
<div class="t" style="left:44px;top:318px;width:200px;height:15px;line-height:15px;text-align:right;transform:scaleX(0.89);transform-origin:100% 0;">Cache Max TTL:</div>
<div style="left:248px;top:339px;width:175px;height:17px;background:#f0f0f0;border:1px solid #a0a0a0;"></div>
<div class="t" style="left:251px;top:341px;height:15px;line-height:15px;text-align:left;transform:scaleX(0.89);transform-origin:0 0;">23 KiB</div>
<div class="t" style="left:44px;top:341px;width:200px;height:15px;line-height:15px;text-align:right;transform:scaleX(0.89);transform-origin:100% 0;">Cache Used:</div>
<div style="left:439px;top:76px;width:82px;height:23px;background:#efefef;border:1px solid #000;box-shadow:inset 0 0 0 1px #fcfcfc;"></div>
<div class="t" style="left:439px;top:81px;width:82px;height:15px;line-height:15px;text-align:center;transform:scaleX(0.89);transform-origin:50% 0;">OK</div>
<div style="left:439px;top:102px;width:82px;height:23px;background:#efefef;border:1px solid #9a9a9a;box-shadow:inset 0 0 0 1px #f8f8f8;"></div>
<div class="t" style="left:439px;top:107px;width:82px;height:15px;line-height:15px;text-align:center;transform:scaleX(0.89);transform-origin:50% 0;">Cancel</div>
<div style="left:439px;top:128px;width:82px;height:23px;background:#efefef;border:1px solid #9a9a9a;box-shadow:inset 0 0 0 1px #f8f8f8;"></div>
<div class="t" style="left:439px;top:133px;width:82px;height:15px;line-height:15px;text-align:center;transform:scaleX(0.89);transform-origin:50% 0;">Apply</div>
<div style="left:439px;top:159px;width:82px;height:23px;background:#efefef;border:1px solid #9a9a9a;box-shadow:inset 0 0 0 1px #f8f8f8;"></div>
<div class="t" style="left:439px;top:164px;width:82px;height:15px;line-height:15px;text-align:center;transform:scaleX(0.89);transform-origin:50% 0;">Static</div>
<div style="left:439px;top:185px;width:82px;height:23px;background:#efefef;border:1px solid #9a9a9a;box-shadow:inset 0 0 0 1px #f8f8f8;"></div>
<div class="t" style="left:439px;top:190px;width:82px;height:15px;line-height:15px;text-align:center;transform:scaleX(0.89);transform-origin:50% 0;">Cache</div>
</body></html>
